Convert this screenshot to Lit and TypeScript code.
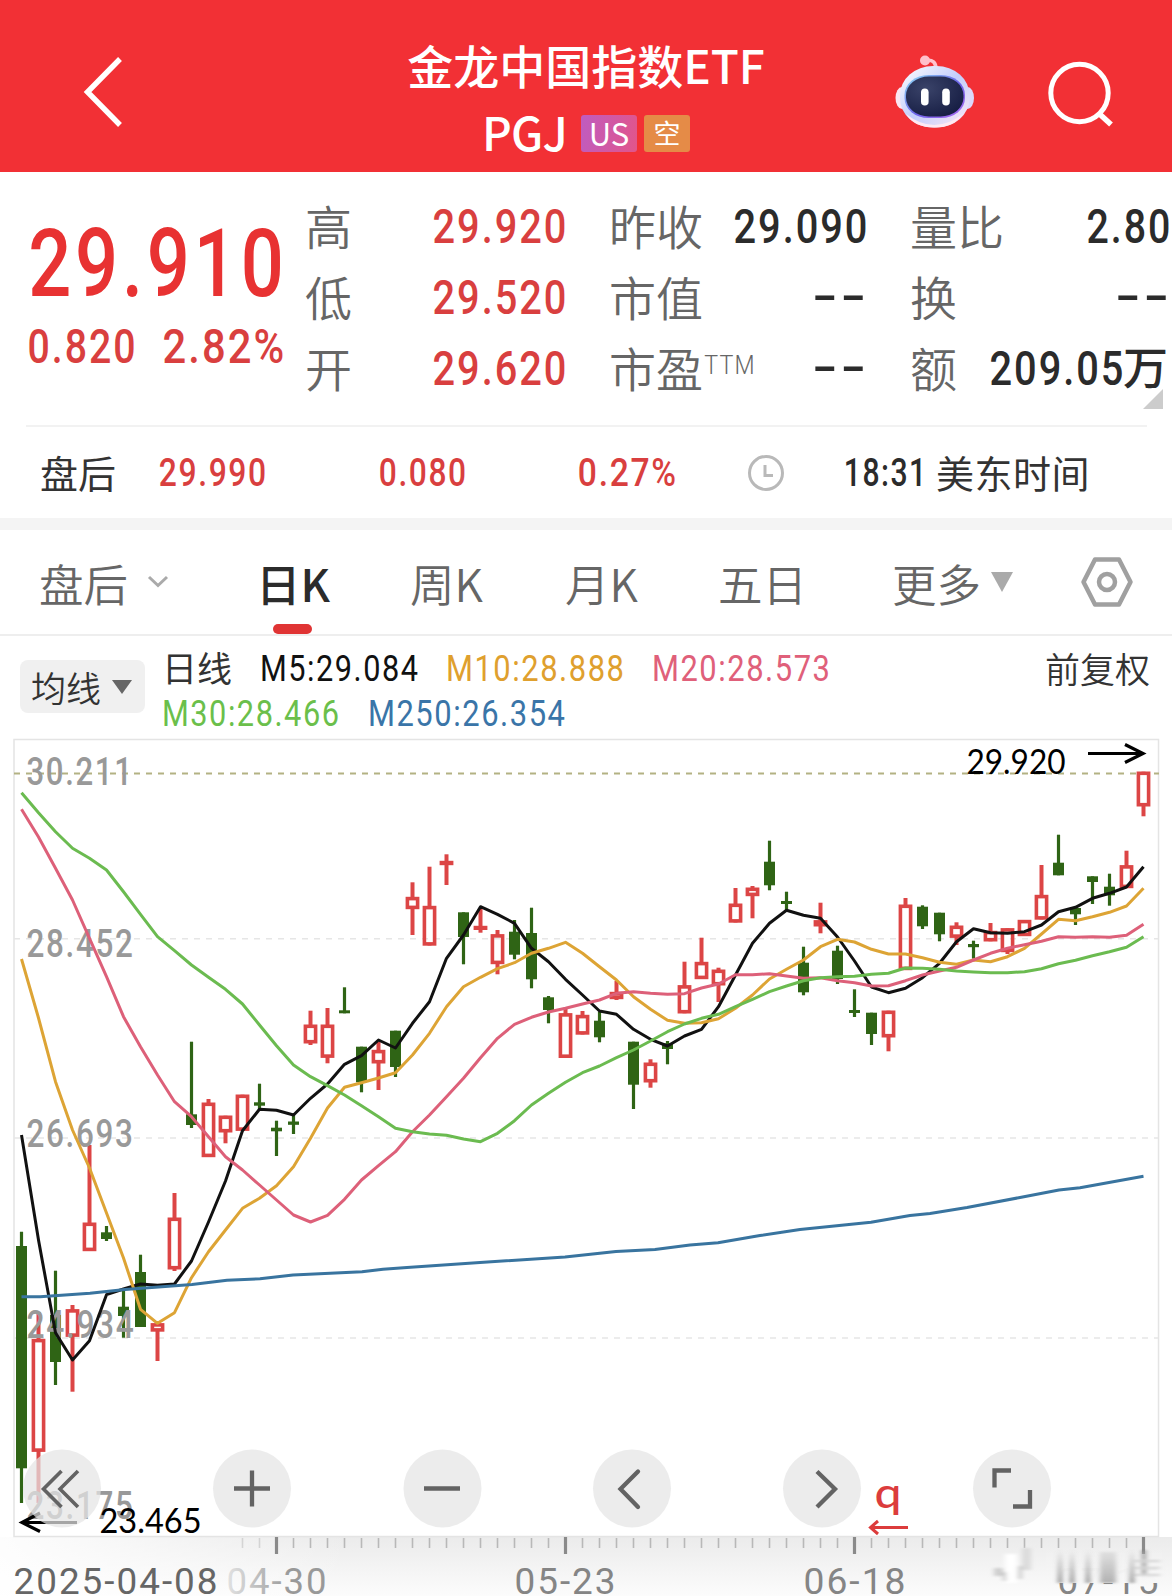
import { LitElement, html, svg, css } from "lit";
import { customElement } from "lit/decorators.js";

type Candle = [number, "r" | "g", number, number, number, number];

const STEP = 17;
const X0 = 21.5;
const px = (i: number) => X0 + STEP * i;

// index, colour, high, body top, body bottom, low (chart canvas units)
const CANDLES: Candle[] = [
  [0, "g", 1231.7, 1246, 1468.3, 1503], [1, "r", 1312, 1339, 1451.7, 1503],
  [2, "g", 1270.7, 1315, 1362, 1385], [3, "r", 1305, 1309.3, 1336.7, 1391.7],
  [4, "r", 1145, 1222.7, 1251, 1251], [5, "g", 1226, 1232.3, 1239, 1241],
  [6, "g", 1290, 1306.7, 1316, 1337.7], [7, "g", 1254.7, 1272, 1327, 1327],
  [8, "r", 1323.3, 1323.3, 1331.5, 1361], [9, "r", 1193, 1217.7, 1269.3, 1271],
  [10, "g", 1041.7, 1114.3, 1125, 1128], [11, "r", 1099, 1102.7, 1157, 1157],
  [12, "r", 1115.7, 1115.7, 1132.3, 1143.3], [13, "r", 1094.7, 1094.7, 1130.7, 1130.7],
  [14, "g", 1083.7, 1102.3, 1105.7, 1110], [15, "g", 1120.7, 1127.7, 1131.3, 1156],
  [16, "g", 1115, 1121.5, 1124.8, 1134], [17, "r", 1010.7, 1024.7, 1043.3, 1045],
  [18, "r", 1008, 1024.7, 1057.7, 1063.3], [19, "g", 987.3, 1010.3, 1013.3, 1013.3],
  [20, "g", 1046.7, 1046.7, 1082.3, 1092.3], [21, "r", 1041.7, 1050, 1063.3, 1090],
  [22, "g", 1030.7, 1030.7, 1067, 1077], [23, "r", 882.3, 897, 909, 935],
  [24, "r", 866.7, 906, 945.5, 945.5], [25, "r", 854.3, 861, 865, 885],
  [26, "g", 912.3, 912.3, 937, 964.3], [27, "r", 908, 926, 929.3, 932.7],
  [28, "r", 930, 934.3, 964, 974.3], [29, "g", 920, 931.7, 954.7, 959.3],
  [30, "g", 907.7, 933, 979.3, 988.3], [31, "g", 996, 997.3, 1010, 1023.3],
  [32, "r", 1008.7, 1013.3, 1057.8, 1057.8], [33, "r", 1011, 1015, 1034.5, 1034.5],
  [34, "g", 1011.7, 1020.7, 1037.3, 1042.3], [35, "r", 981, 992, 999, 1000],
  [36, "g", 1041.7, 1041.7, 1084.7, 1109], [37, "r", 1059.3, 1062.7, 1082.3, 1087.7],
  [38, "g", 1041, 1043.3, 1049, 1064.3], [39, "r", 961.7, 985.3, 1013.3, 1013.3],
  [40, "r", 937.7, 962, 979, 979], [41, "r", 967.7, 969.7, 985.3, 1002],
  [42, "r", 888, 903.7, 922.5, 922.5], [43, "r", 886, 887.7, 896, 918.3],
  [44, "g", 840.7, 861.7, 885.3, 890.3], [45, "g", 891.7, 901, 904, 910],
  [46, "g", 946.7, 962.7, 992.3, 995.3], [47, "r", 902.7, 920.3, 926.3, 933.3],
  [48, "g", 945.7, 950.7, 979, 984], [49, "g", 989.3, 1010, 1013, 1017],
  [50, "g", 1012.7, 1012.7, 1034, 1045], [51, "r", 1010.7, 1010.7, 1037.3, 1051.3],
  [52, "r", 898, 904.7, 970, 970], [53, "g", 905.3, 906.7, 926.3, 929],
  [54, "g", 912.7, 912.7, 934.3, 941.3], [55, "r", 922.3, 925.7, 937.7, 945],
  [56, "g", 940.7, 944, 947.2, 958.7], [57, "r", 923, 931, 941.3, 941.3],
  [58, "r", 928.3, 928.3, 952, 954], [59, "r", 920, 920, 936, 936],
  [60, "r", 865, 895, 919.5, 919.5], [61, "g", 834.7, 862.7, 875.3, 875.3],
  [62, "g", 906.7, 908, 914.3, 925], [63, "g", 876.3, 876.3, 882, 904],
  [64, "g", 873.7, 886.7, 895.3, 905.7], [65, "r", 850.7, 865.3, 888, 888],
  [66, "r", 771.7, 771.7, 806.3, 816.3],
];

const MA5 = [1135, 1240, 1332.7, 1360, 1340.7, 1294.7, 1289, 1284, 1285.3, 1284, 1261, 1222, 1181, 1130.7, 1109.3, 1110.3, 1115, 1098.3, 1084, 1064.3, 1055.7, 1040, 1048, 1023.3, 1001.7, 958.3, 935, 906.7, 914.3, 923.3, 948.3, 961.7, 979.3, 995, 1011, 1014.3, 1029.3, 1039.3, 1046, 1036, 1029.3, 1006.7, 975, 943.3, 923.3, 910.3, 915.3, 918.3, 937, 961, 987, 992.7, 988.3, 977.7, 963.3, 941.7, 928.7, 932.7, 933.3, 931.7, 925, 911.7, 907.3, 898.3, 893.3, 887, 866.7];
const MA10 = [959, 1018, 1081.7, 1130, 1168, 1213, 1258, 1309.3, 1323.3, 1312.7, 1277.7, 1251.7, 1230, 1208.3, 1198.3, 1185.7, 1166.7, 1138.3, 1108, 1087.3, 1082.7, 1078, 1072.7, 1055, 1033.3, 1006.7, 986.7, 977.3, 968.7, 962.7, 953.3, 948.3, 942.3, 953.3, 966.7, 980, 996.7, 1009.3, 1020.3, 1023.3, 1022.7, 1018.7, 1008.3, 995, 979, 969.3, 960, 946.7, 939.3, 942, 949.3, 954, 954, 957.7, 962.3, 964.3, 960, 961.7, 956.7, 948.3, 934, 919.3, 920.7, 916.7, 912.3, 906, 888.3];
const MA20 = [809.3, 837, 868.3, 900, 938.3, 976.7, 1016.7, 1046.7, 1075, 1101.7, 1116.7, 1136.7, 1156.7, 1170, 1185, 1200, 1215, 1222, 1215.3, 1199.3, 1180, 1165.7, 1151.7, 1131.7, 1115, 1096.7, 1078.3, 1057.7, 1038.3, 1024.3, 1017.3, 1012, 1008.3, 1004, 1000, 993.3, 991.7, 993.3, 994.3, 993.7, 988, 984, 974.7, 974.7, 973.7, 976, 978.3, 977.7, 980.7, 982.7, 986, 985.7, 980.7, 975, 971, 967.3, 960, 953.3, 948.3, 944.7, 941.3, 936.7, 937.3, 936.7, 937.3, 935.3, 924.3];
const MA30 = [792.7, 812.7, 831.7, 848.3, 858.3, 870, 891.7, 914.3, 936.7, 950.7, 965, 977.3, 989.3, 1004, 1025, 1045.7, 1065, 1076.7, 1085.7, 1095, 1105.7, 1116.7, 1128.2, 1131.7, 1134, 1135.3, 1139, 1141.7, 1133.3, 1120.7, 1105, 1093.3, 1082.3, 1072.7, 1066, 1057.7, 1050, 1041, 1031.7, 1024, 1018.3, 1014.3, 1006.7, 999.3, 991.7, 986, 980.7, 977.7, 976.7, 976.3, 974.3, 973.3, 968, 968.3, 969.3, 971, 972, 972.7, 972.7, 971.7, 968.7, 963.7, 960.3, 955.7, 951.7, 947.3, 936.7];
const MA250: [number, number][] = [[21.5, 1296.7], [40, 1296.7], [90, 1293.3], [125, 1289.5], [192, 1284.5], [227, 1280.3], [260, 1278.7], [293, 1275], [362, 1271.7], [383, 1269.3], [407, 1267.5], [480, 1262.5], [565, 1257], [616, 1251.5], [655, 1249.5], [690, 1245], [718, 1242.8], [760, 1235.5], [800, 1229.5], [871, 1222.3], [910, 1215.5], [930, 1213.5], [967, 1207.5], [1020, 1197.5], [1059, 1190], [1080, 1187.8], [1143.5, 1176.3]];

const line = (ys: number[]) => ys.map((y, i) => `${px(i)},${y}`).join(" ");

// Numeric label drawn at an exact ink width.
const fit = (t: string, w: number, size: number, cls = "", weight = 500) => {
  const b = size * 0.03;
  return html`<svg class="fit ${cls}" width=${w} height=${size}>
    <text x=${-b} y=${size * 0.5 + size * 0.356} font-size=${size} font-weight=${weight} letter-spacing=${size * 0.05}
      textLength=${w + 2 * b + size * 0.04} lengthAdjust="spacingAndGlyphs">${t}</text></svg>`;
};

@customElement("quote-header")
class QuoteHeader extends LitElement {
  static styles = css`
    :host { display: grid; grid-template-columns: 400px 372px 400px; height: 172px; background: #f23035;
      color: #fff; font-family: "Noto Sans CJK SC", sans-serif; }
    .back { margin: 56px 0 0 80px; }
    .mid { display: flex; flex-direction: column; align-items: center; padding-top: 31px; }
    .name { font-size: 46px; line-height: 66px; font-weight: 500; white-space: nowrap; }
    .sub { display: flex; align-items: center; height: 73px; }
    .code { font-size: 46px; line-height: 60px; letter-spacing: -.8px; margin-right: 14px; padding-bottom: 5px; font-weight: 500; }
    .tag { height: 37px; line-height: 36px; text-align: center; border-radius: 3px; font-size: 31px; }
    .us { width: 56px; background: linear-gradient(100deg, #bf5cc0, #e2558a); margin-right: 7px; }
    .short { width: 46px; background: #e58b47; font-size: 27px; }
    .acts { display: flex; }
    .bot { margin: 52px 0 0 120px; }
    .find { margin: 58px 0 0 70px; }
  `;
  render() {
    return html`
      <svg class="back" width="44" height="72" fill="none" stroke="#fff" stroke-width="5.4">
        <path d="M40 3 L7.5 36 L40 69" stroke-linejoin="miter" />
      </svg>
      <div class="mid">
        <div class="name">金龙中国指数ETF</div>
        <div class="sub"><span class="code">PGJ</span><span class="tag us">US</span><span class="tag short">空</span></div>
      </div>
      <div class="acts">
        <svg class="bot" width="86" height="80" viewBox="0 0 86 80">
          <defs>
            <linearGradient id="shell" x1="0" y1="0" x2="1" y2="1">
              <stop offset="0" stop-color="#ffffff" /><stop offset=".5" stop-color="#c3cdfb" /><stop offset="1" stop-color="#ffe9f4" />
            </linearGradient>
            <linearGradient id="rim" x1="0" y1="0" x2="1" y2="1">
              <stop offset="0" stop-color="#8fdcf5" /><stop offset=".55" stop-color="#6c62e8" /><stop offset="1" stop-color="#b06af0" />
            </linearGradient>
            <radialGradient id="face" cx=".35" cy=".3" r=".8">
              <stop offset="0" stop-color="#3a4369" /><stop offset="1" stop-color="#151c42" />
            </radialGradient>
          </defs>
          <path d="M34 8.500 Q44 7 44 17" fill="none" stroke="#ffc3cf" stroke-width="3.6" />
          <circle cx="33" cy="8.5" r="5" fill="#ffc0cb" />
          <ellipse cx="10" cy="46" rx="6.5" ry="11" fill="#fbe6f2" />
          <ellipse cx="75.5" cy="46" rx="6.5" ry="11" fill="#dcd8fb" />
          <rect x="8" y="14" width="69.5" height="61.5" rx="33" ry="29" fill="url(#shell)" />
          <path d="M14 62 Q42 84 71 62 Q62 75.5 42.5 75.5 Q22 75.5 14 62Z" fill="#ffe9f2" />
          <rect x="12.5" y="23" width="60.500" height="43" rx="24" ry="20" fill="url(#rim)" />
          <rect x="14" y="24.500" width="57.500" height="40" rx="23" ry="19" fill="url(#face)" />
          <rect x="29" y="36.500" width="7.600" height="17" rx="3.800" fill="#fff" />
          <rect x="50.200" y="36.500" width="7.600" height="17" rx="3.800" fill="#fff" />
        </svg>
        <svg class="find" width="70" height="70" fill="none" stroke="#fff">
          <circle cx="31.500" cy="35" r="28.700" stroke-width="5" />
          <path d="M51 55.500 L63 66.500" stroke-width="5.500" />
        </svg>
      </div>`;
  }
}

@customElement("quote-summary")
class QuoteSummary extends LitElement {
  static styles = css`
    :host { display: block; height: 346px; background: #fff; font-family: "Noto Sans CJK SC", sans-serif; }
    .fit { display: block; overflow: visible; font-family: Roboto, sans-serif; fill: #2b2b2b; }
    .up { fill: #d93f3f; }
    .hot { fill: #e83232; }
    .top { display: grid; grid-template-columns: 305px 1fr; height: 253px; }
    .price { padding: 44px 0 0 31px; }
    .delta { display: flex; gap: 30px; margin: 11px 0 0 -2px; }
    .cells { display: grid; grid-template-columns: 130px 174px 127px 174px 80px 181px; grid-template-rows: repeat(3, 71px); padding-top: 18px; align-items: center; position: relative; }
    .lab { font-size: 47px; line-height: 66px; padding-bottom: 2px; color: #666; white-space: nowrap; font-weight: 350; }
    .ttm { display: inline-block; margin-left: 2px; vertical-align: 9px; }
    .ttm .fit { fill: #666; }
    .c { justify-self: end; }
    .c1 { margin-right: 44px; }
    .c2 { margin-right: 44px; }
    .c3 { margin-right: 2px; }
    .dash { padding-bottom: 4px; }
    .amt { display: flex; align-items: center; gap: 1px; margin-right: 3px; }
    .wan { font-size: 45px; line-height: 60px; padding-bottom: 3px; color: #2b2b2b; font-weight: 500; }
    .fold { position: absolute; right: 9px; top: 217px; width: 0; height: 0; border-left: 20px solid transparent; border-bottom: 20px solid #ccc; }
    .post { display: flex; align-items: center; height: 91px; margin: 0 25px 0 26px; padding-left: 14px; border-top: 2px solid #f2f2f2; }
    .post .t { font-size: 38px; line-height: 56px; padding-bottom: 2px; color: #333; white-space: nowrap; }
    .p1 { margin-left: 44px; } .p2 { margin-left: 115px; } .p3 { margin-left: 114px; }
    .clock { margin-left: 72px; } .p4 { margin-left: 60px; } .post .tz { margin-left: 11px; letter-spacing: .5px; }
  `;
  render() {
    return html`
      <div class="top">
        <div>
          <div class="price">${fit("29.910", 250, 94, "hot")}
            <div class="delta">${fit("0.820", 105, 49, "up")}${fit("2.82%", 119, 49, "up")}</div>
          </div>
        </div>
        <div class="cells">
          <div class="lab">高</div><div class="c c1">${fit("29.920", 131, 49, "up")}</div>
          <div class="lab">昨收</div><div class="c c2">${fit("29.090", 131, 49)}</div>
          <div class="lab">量比</div><div class="c c3">${fit("2.80", 81, 49)}</div>
          <div class="lab">低</div><div class="c c1">${fit("29.520", 131, 49, "up")}</div>
          <div class="lab">市值</div><div class="c c2 dash">${fit("--", 52, 49)}</div>
          <div class="lab">换</div><div class="c c3 dash">${fit("--", 52, 49)}</div>
          <div class="lab">开</div><div class="c c1">${fit("29.620", 131, 49, "up")}</div>
          <div class="lab">市盈<span class="ttm">${fit("TTM", 49, 25, "", 300)}</span></div><div class="c c2 dash">${fit("--", 52, 49)}</div>
          <div class="lab">额</div><div class="c amt">${fit("209.05", 131, 49)}<span class="wan">万</span></div>
          <span class="fold"></span>
        </div>
      </div>
      <div class="post">
        <span class="t">盘后</span>
        <span class="p1">${fit("29.990", 105, 39, "up")}</span>
        <span class="p2">${fit("0.080", 85, 39, "up")}</span>
        <span class="p3">${fit("0.27%", 96, 39, "up")}</span>
        <svg class="clock" width="38" height="38" fill="none" stroke="#b9b9b9">
          <circle cx="19" cy="19" r="16.500" stroke-width="3" /><path d="M18 11 V21.500 H26" stroke-width="3" />
        </svg>
        <span class="p4">${fit("18:31", 80, 39)}</span>
        <span class="t tz">美东时间</span>
      </div>`;
  }
}

@customElement("period-tabs")
class PeriodTabs extends LitElement {
  static styles = css`
    :host { display: flex; height: 104px; border-top: 12px solid #f4f4f4; border-bottom: 2px solid #eee; background: #fff;
      font: 350 44.5px/62px "Noto Sans CJK SC", sans-serif; color: #666; box-sizing: content-box; }
    .tab { display: flex; align-items: center; height: 104px; white-space: nowrap; }
    .tab span { padding-top: 2px; }
    .a { margin-left: 39px; width: 217px; }
    .b { width: 154px; color: #2b2b2b; font-weight: 500; position: relative; }
    .b::after { content: ""; position: absolute; left: 17px; bottom: 0; width: 39px; height: 10px; border-radius: 5px; background: #e03434; }
    .d { width: 155px; } .e { width: 153px; } .f { width: 174px; } .g { width: 188px; }
    .a svg { margin-left: 19px; } .g svg { margin-left: 9px; }
  `;
  render() {
    return html`
      <div class="tab a"><span>盘后</span><svg width="22" height="14" fill="none" stroke="#aaa" stroke-width="3"><path d="M2 2 L11 10.500 L20 2" /></svg></div>
      <div class="tab b"><span>日K</span></div>
      <div class="tab d"><span>周K</span></div>
      <div class="tab e"><span>月K</span></div>
      <div class="tab f"><span>五日</span></div>
      <div class="tab g"><span>更多</span><svg width="24" height="20"><path d="M1 0 H23 L12 20 Z" fill="#aaa" /></svg></div>
      <div class="tab"><svg width="54" height="54" fill="none" stroke="#a0a0a0" stroke-width="4.500" stroke-linejoin="round">
        <path d="M15 4.500 H39 L50.500 27 L39 49.500 H15 L3.500 27 Z" /><circle cx="27" cy="27" r="8" /></svg></div>`;
  }
}

@customElement("ma-legend")
class MaLegend extends LitElement {
  static styles = css`
    :host { display: flex; height: 102px; background: #fff; font: 35px/50px "Noto Sans CJK SC", sans-serif; color: #333; }
    .fit { display: block; overflow: visible; font-family: Roboto, sans-serif; }
    .pick { display: flex; align-items: center; gap: 11px; width: 125px; height: 53px; margin: 24px 0 0 20px; background: #f0f0f0; border-radius: 8px; box-sizing: border-box; padding-left: 11px; }
    .pick span { padding-bottom: 0; font-weight: 350; }
    .rows { flex: 1; margin-left: 17px; }
    .row { display: flex; align-items: center; height: 45px; padding-left: 1px; }
    .row:first-child { padding: 9px 0 0; }
    .t { width: 99px; padding-bottom: 1px; }
    .k { fill: #111; margin-right: 30px; } .o { fill: #dfa02e; margin-right: 30px; } .p { fill: #e0607a; }
    .g { fill: #6bbf4b; margin-right: 31px; } .b { fill: #3a75a8; }
    .adj { margin: 7px 22px 0 0; font-weight: 350; }
  `;
  render() {
    return html`
      <div class="pick"><span>均线</span><svg width="20" height="14"><path d="M0 0 H20 L10 14 Z" fill="#666" /></svg></div>
      <div class="rows">
        <div class="row"><span class="t">日线</span>${fit("M5:29.084", 156, 36, "k", 450)}${fit("M10:28.888", 176, 36, "o", 450)}${fit("M20:28.573", 176, 36, "p", 450)}</div>
        <div class="row">${fit("M30:28.466", 175, 36, "g", 450)}${fit("M250:26.354", 195, 36, "b", 450)}</div>
      </div>
      <div class="adj">前复权</div>`;
  }
}

@customElement("k-chart")
class KChart extends LitElement {
  static styles = css`
    :host { display: block; width: 1172px; height: 858px; overflow: hidden; background: #fff; }
    svg { display: block; }
    .ax { font-family: Roboto, sans-serif; font-size: 38px; font-weight: 500; letter-spacing: 2px; fill: #999; }
    .date { font-family: Roboto, sans-serif; font-size: 37px; font-weight: 450; letter-spacing: 2px; fill: #858585; }
    .mark { font-family: Lato, sans-serif; font-size: 34px; fill: #000; }
    .sig { font-family: Lato, sans-serif; font-size: 43px; fill: #dc3c3c; font-weight: 500; }
    .r { fill: none; stroke: #dc4545; stroke-width: 3.6; }
    .rw { stroke: #dc4545; stroke-width: 4; }
    .g { fill: #2f6415; }
    .gw { stroke: #2f6415; stroke-width: 3.2; }
    .ma { fill: none; stroke-width: 3; stroke-linejoin: round; }
    .grid { stroke: #e6e6e6; stroke-width: 1.5; stroke-dasharray: 6 6; }
    .btn { fill: rgba(229, 229, 229, .72); }
    .ic { fill: none; stroke: #636363; stroke-width: 4.3; }
  `;
  candle([i, c, h, t, b, l]: Candle) {
    const x = px(i);
    if (c === "g")
      return svg`<line class="gw" x1=${x} x2=${x} y1=${h} y2=${l} /><rect class="g" x=${x - 5.5} y=${t} width="11" height=${b - t} />`;
    return svg`<line class="rw" x1=${x} x2=${x} y1=${h} y2=${t + 1} /><line class="rw" x1=${x} x2=${x} y1=${b - 1} y2=${l} />
      <rect class="r" x=${x - 5.1} y=${t + 1.6} width="10.2" height=${Math.max(b - t - 3.2, 0.6)} />`;
  }
  txt(cls: string, t: string, x: number, y: number, w: number, fill = "") {
    return svg`<text class=${cls} x=${x - 1.5} y=${y} textLength=${w + (cls === "mark" ? 2 : 4)} lengthAdjust="spacingAndGlyphs" style=${fill ? `fill:${fill}` : ""}>${t}</text>`;
  }
  render() {
    const ticks = Array.from({ length: 54 }, (_, k) => k + 13);
    return html`<svg width="1172" height="858" viewBox="0 738 1172 858">
      <defs>
        <linearGradient id="axv" x1="0" y1="0" x2="0" y2="1"><stop offset="0" stop-color="#ebebeb" /><stop offset="1" stop-color="#fcfcfc" /></linearGradient>
        <linearGradient id="axh"><stop offset="0" stop-color="#fff" stop-opacity=".9" /><stop offset=".3" stop-color="#fff" stop-opacity="0" /></linearGradient>
        <linearGradient id="fade" gradientUnits="userSpaceOnUse" x1="225" y1="0" x2="290" y2="0"><stop offset="0" stop-color="#e4e4e4" /><stop offset="1" stop-color="#999" /></linearGradient>
        <linearGradient id="veil" x1="0" y1="0" x2="0" y2="1"><stop offset="0" stop-color="#f3f3f3" stop-opacity="0" /><stop offset=".4" stop-color="#f3f3f3" stop-opacity=".95" /><stop offset="1" stop-color="#f8f8f8" /></linearGradient>
        <linearGradient id="smear" x1="0" y1="0" x2="0" y2="1"><stop offset="0" stop-color="#777" stop-opacity="0" /><stop offset="1" stop-color="#777" stop-opacity=".9" /></linearGradient>
        <linearGradient id="block" x1="0" y1="0" x2="0" y2="1"><stop offset="0" stop-color="#999" stop-opacity=".2" /><stop offset="1" stop-color="#999" stop-opacity=".75" /></linearGradient>
        <filter id="soft"><feGaussianBlur stdDeviation="2.6 1" /></filter>
      </defs>
      <rect x="0" y="1537" width="1172" height="59" fill="url(#axv)" />
      <rect x="0" y="1537" width="1172" height="59" fill="url(#axh)" />
      <rect x="14" y="739.5" width="1144.500" height="797" fill="#fff" stroke="#e4e4e4" stroke-width="1.500" />
      ${[938.7, 1138, 1338].map((y) => svg`<line class="grid" x1="14" x2="1158" y1=${y} y2=${y} />`)}
      <line x1="14" x2="1159" y1="773.500" y2="773.500" stroke="#b3b283" stroke-width="1.800" stroke-dasharray="6 6" />
      ${CANDLES.map((c) => this.candle(c))}
      ${this.txt("ax", "30.211", 28, 785, 103)}${this.txt("ax", "28.452", 28, 956.5, 104)}
      ${this.txt("ax", "26.693", 28, 1146.5, 104)}${this.txt("ax", "24.934", 28, 1338, 105)}${this.txt("ax", "23.175", 28, 1519, 104)}
      <polyline class="ma" stroke="#111" points=${line(MA5)} />
      <polyline class="ma" stroke="#dda435" points=${line(MA10)} />
      <polyline class="ma" stroke="#dd6079" points=${line(MA20)} />
      <polyline class="ma" stroke="#6bbb50" points=${line(MA30)} />
      <polyline class="ma" stroke="#39749f" points=${MA250.map((p) => p.join(",")).join(" ")} />
      ${this.txt("mark", "29.920", 968, 773.5, 97)}
      <path d="M1088 753.500 H1142 M1125 744.500 L1143 753.500 L1125 762.500" fill="none" stroke="#000" stroke-width="3.200" />
      <path d="M77 1522.500 H23 M40 1513 L22 1522.500 L40 1531.500" fill="none" stroke="#000" stroke-width="3.200" />
      ${[62, 252, 442.5, 632, 822, 1012].map((x) => svg`<circle class="btn" cx=${x} cy="1488.500" r="39" />`)}
      ${this.txt("mark", "23.465", 101, 1532.5, 100)}
      <g class="ic">
        <path d="M61.500 1471 L43.500 1489 L61.500 1507 M78 1471 L60 1489 L78 1507" stroke-width="3.600" />
        <path d="M234 1488.500 H270 M252 1470.500 V1506.500" /><path d="M424 1488.500 H460" />
        <path d="M638 1471.500 L620.500 1489 L638 1507" stroke-linecap="round" /><path d="M817 1471.500 L835 1489 L817 1507" />
        <path d="M1011 1470.500 H994.500 V1487.500 M1013 1506.500 H1030 V1490" />
      </g>
      <text class="sig" x="874.500" y="1508" textLength="27" lengthAdjust="spacingAndGlyphs">q</text>
      <path d="M908 1527.500 H871 M878 1521 L870.500 1527.500 L878 1534" fill="none" stroke="#dc3c3c" stroke-width="3" />
      ${ticks.map((i) => ((i - 15) % 17 === 0
        ? svg`<line x1=${px(i)} x2=${px(i)} y1="1537" y2="1554" stroke="#8a8a8a" stroke-width="3.200" />`
        : svg`<line x1=${px(i)} x2=${px(i)} y1="1538" y2="1548" stroke="#b8b8b8" stroke-width="1.600" opacity=${i < 15 ? 0.5 : 1} />`))}
      ${this.txt("date", "2025-04-08", 15, 1594, 202, "#666")}${this.txt("date", "04-30", 228, 1594, 98, "url(#fade)")}
      ${this.txt("date", "05-23", 516, 1594, 99)}${this.txt("date", "06-18", 805, 1594, 100)}${this.txt("date", "07-15", 1059, 1594, 99)}
      <rect x="1046" y="1550" width="116" height="33" fill="url(#veil)" />
      <g filter="url(#soft)">
        <rect x="1005" y="1554" width="12" height="29" fill="#fff" /><rect x="994" y="1568" width="9" height="8" fill="#cfcfcf" />
        <rect x="1003" y="1572" width="3" height="9" fill="#c4c4c4" /><rect x="1018" y="1566" width="4" height="13" fill="#cdcdcd" />
        <rect x="1022" y="1548" width="9" height="22" fill="#dcdcdc" />
        ${[1058, 1070, 1086, 1130].map((x) => svg`<rect x=${x} y="1550" width="4" height="33" fill="url(#smear)" />`)}
        <rect x="1100" y="1552" width="16" height="31" fill="url(#block)" />
        <rect x="1142" y="1550" width="4" height="24" fill="#888" opacity=".8" />
        ${[1560, 1567, 1574].map((y) => svg`<rect x="1134" y=${y} width="26" height="2" fill="#d4d4d4" />`)}
      </g>
    </svg>`;
  }
}

@customElement("app-root")
class AppRoot extends LitElement {
  static styles = css`
    :host { display: flex; flex-direction: column; width: 1172px; height: 1596px; overflow: hidden; background: #fff; }
  `;
  render() {
    return html`<quote-header></quote-header><quote-summary></quote-summary><period-tabs></period-tabs><ma-legend></ma-legend><k-chart></k-chart>`;
  }
}
